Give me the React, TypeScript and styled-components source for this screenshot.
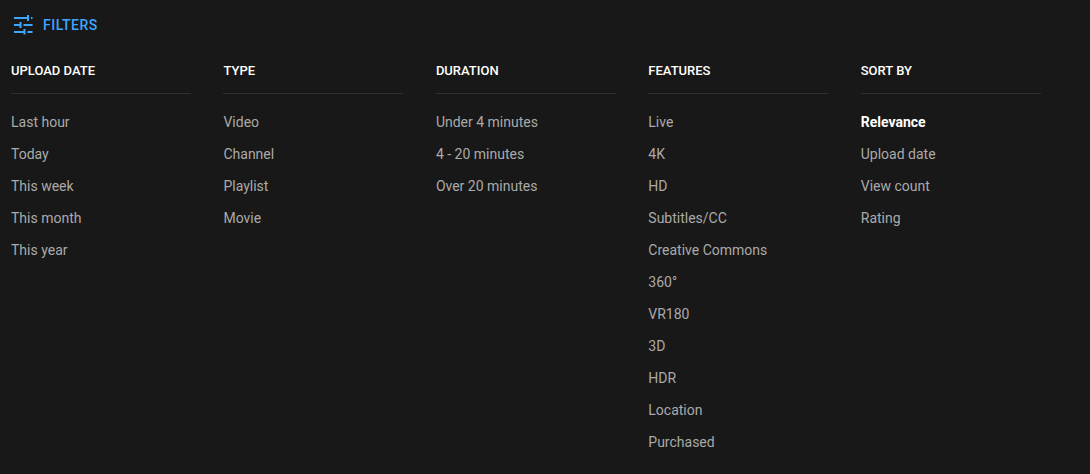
import React from "react";
import styled, { createGlobalStyle } from "styled-components";

const Global = createGlobalStyle`
  html, body { margin: 0; padding: 0; background: #181818; }
  body { font-family: Roboto, "Liberation Sans", sans-serif; }
`;

const Page = styled.div`
  width: 1090px;
  height: 474px;
  overflow: hidden;
  background: #181818;
  box-sizing: border-box;
  padding: 0 11px;
`;

const FilterToggle = styled.div`
  height: 50px;
  display: flex;
  align-items: center;
  gap: 6px;
  padding-left: 2px;
  color: #3ea6ff;
  font-size: 14px;
  font-weight: 500;
  letter-spacing: 0.5px;
  line-height: 20px;
`;

const Columns = styled.div`
  display: flex;
  gap: 32.45px;
`;

const Column = styled.div`
  width: 180px;
  flex: none;
`;

const Heading = styled.div`
  color: #ffffff;
  font-size: 13px;
  font-weight: 500;
  line-height: 16px;
  padding: 13px 0 14px;
  margin-bottom: 12px;
  border-bottom: 1px solid #303030;
  text-transform: uppercase;
`;

const Option = styled.div<{ $active?: boolean }>`
  height: 32px;
  display: flex;
  align-items: center;
  font-size: 14px;
  line-height: 20px;
  color: ${(p) => (p.$active ? "#ffffff" : "#aaaaaa")};
  font-weight: ${(p) => (p.$active ? 700 : 400)};
`;

const Icon = () => (
  <svg width="24" height="24" viewBox="0 0 24 24" fill="none" stroke="#3ea6ff" strokeWidth="2">
    <path d="M1 5h14M18 5h1.5M15 2v6" />
    <path d="M1 12h6.5M10.5 12h9M7.5 9v6" />
    <path d="M1 19h10.5M14.5 19h5M11.5 16v5.5" />
  </svg>
);

const data = [
  { title: "Upload date", items: ["Last hour", "Today", "This week", "This month", "This year"] },
  { title: "Type", items: ["Video", "Channel", "Playlist", "Movie"] },
  { title: "Duration", items: ["Under 4 minutes", "4 - 20 minutes", "Over 20 minutes"] },
  { title: "Features", items: ["Live", "4K", "HD", "Subtitles/CC", "Creative Commons", "360°", "VR180", "3D", "HDR", "Location", "Purchased"] },
  { title: "Sort by", items: ["Relevance", "Upload date", "View count", "Rating"] },
];

export default function App() {
  return (
    <Page>
      <Global />
      <FilterToggle>
        <Icon />
        <span>FILTERS</span>
      </FilterToggle>
      <Columns>
        {data.map((c) => (
          <Column key={c.title}>
            <Heading>{c.title}</Heading>
            {c.items.map((i) => (
              <Option key={i} $active={i === "Relevance"}>{i}</Option>
            ))}
          </Column>
        ))}
      </Columns>
    </Page>
  );
}
